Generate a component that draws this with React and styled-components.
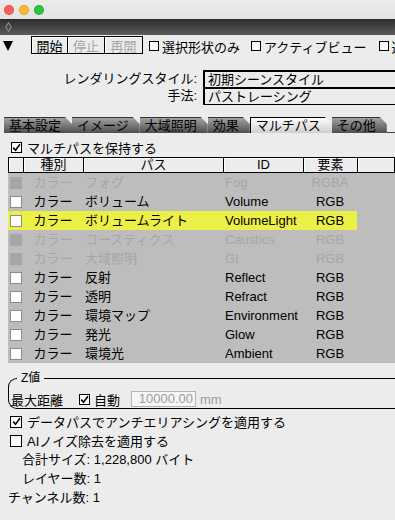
import React from 'react';
import styled, { createGlobalStyle, css } from 'styled-components';

const GlobalStyle = createGlobalStyle`
  html, body { margin: 0; padding: 0; overflow: hidden; }
  body {
    background: #ececec;
    font-family: "Liberation Sans", "Noto Sans CJK JP", sans-serif;
    font-size: 13px;
    color: #000;
  }
`;

// window chrome
const Win = styled.div`
  width: 395px;
  height: 520px;
  overflow: hidden;
  background: #ececec;
`;

const TitleBar = styled.div`
  height: 19px;
  display: flex;
  align-items: center;
  gap: 5px;
  padding-left: 4px;
  background: linear-gradient(#ececec, #e2e2e2);
`;

const Light = styled.span`
  width: 10px;
  height: 10px;
  border-radius: 50%;
  box-sizing: border-box;
  background: ${p => p.$c};
  border: 0.5px solid rgba(0, 0, 0, 0.15);
`;

const DarkBar = styled.div`
  height: 16px;
  display: flex;
  align-items: center;
  padding-left: 5px;
  background: linear-gradient(#2c2c2c, #5c5c5c);
`;

const Toolbar = styled.div`
  height: 22px;
  display: flex;
  align-items: center;
  padding-left: 3px;
  white-space: nowrap;
  overflow: hidden;

  & > * { flex: none; }
`;

const BtnGroup = styled.div`
  display: flex;
  margin-left: 19px;
  margin-top: -2px;
`;

const ToolBtn = styled.div`
  width: ${p => p.$w}px;
  height: 18px;
  box-sizing: border-box;
  border: 1px solid #000;
  margin-left: -1px;
  display: flex;
  align-items: center;
  justify-content: center;
  color: ${p => (p.$disabled ? '#a4a4a4' : '#000')};
  background: #ececec;
  box-shadow: inset 1px 1px #fff;
`;

const ToolCheck = styled.label`
  display: flex;
  align-items: center;
  gap: 3px;
  margin-left: ${p => p.$ml}px;
`;

const Box = styled.span`
  flex: none;
  width: ${p => p.$size}px;
  height: ${p => p.$size}px;
  box-sizing: border-box;
  background: #fff;
  border: 1px solid ${p => p.$border || '#000'};
  display: flex;
  align-items: center;
  justify-content: center;
  ${p => p.$off && css`
    background: #a6a6a6;
    border-color: #a6a6a6;
  `}
`;

// rendering style
const StyleGrid = styled.div`
  margin-top: 13px;
  display: grid;
  grid-template-columns: 197px 1fr;
  grid-auto-rows: 17px;
  column-gap: 6px;
`;

const StyleLabel = styled.div`
  text-align: right;
  white-space: nowrap;
  line-height: 18px;
`;

const StyleBox = styled.div`
  height: 18px;
  box-sizing: border-box;
  border: 1px solid #000;
  border-width: 2px 1px 1px 2px;
  margin-right: -20px;
  padding-left: 3px;
  line-height: 15px;
  white-space: nowrap;
`;

// tabs
const TabBar = styled.div`
  margin-top: 13px;
  display: flex;
  padding-left: 4px;
  height: 16px;
`;

const Tab = styled.div`
  height: 16px;
  line-height: 16px;
  padding: 0 11px 0 5px;
  white-space: nowrap;
  clip-path: polygon(0 0, calc(100% - 7px) 0, 100% 7px, 100% 100%, 0 100%);
  background: linear-gradient(#a2a2a2, #4e4e4e);
  border-top: 1px solid #333;
  box-sizing: border-box;
  ${p => p.$active && css`
    background: linear-gradient(#fdfdfd, #cfcfcf);
    border-top: 1px solid #000;
    border-left: 1px solid #000;
  `}
`;

const TabFill = styled.div`
  flex: 1;
  border-bottom: 1px solid #444;
`;

// multipass panel
const Panel = styled.div`
  padding-left: 8px;
`;

const CheckRow = styled.label`
  height: 19px;
  display: flex;
  align-items: center;
  gap: 5px;
  padding-left: ${p => p.$pl ?? 3}px;
  margin-top: ${p => p.$mt || 0}px;
  white-space: nowrap;
`;

const cols = '15px 60px 140px 80px 54px 1fr';

const Head = styled.div`
  display: grid;
  grid-template-columns: ${cols};
  height: 16px;
  box-sizing: border-box;
  border-top: 1px solid #000;
  border-bottom: 1px solid #000;
  border-left: 1px solid #000;
`;

const HeadCell = styled.div`
  border-right: 1px solid #000;
  text-align: center;
  line-height: 14px;
  box-shadow: inset 1px 1px #fff;
  white-space: nowrap;
`;

const Body = styled.div`
  background: #bdbdbd;
`;

const Row = styled.div`
  display: grid;
  grid-template-columns: ${cols};
  height: 19px;
  line-height: 19px;
  color: ${p => (p.$off ? '#a6a6a6' : '#000')};
  ${p => p.$sel && css`
    & > div:not(:last-child) { background: #ebf046; }
  `}
`;

const Cell = styled.div`
  display: flex;
  align-items: center;
  justify-content: ${p => p.$align || 'flex-start'};
  padding-left: ${p => p.$pl || 0}px;
  white-space: nowrap;
`;

// z group
const Group = styled.fieldset`
  margin: 8px -20px 0 8px;
  padding: 0 0 0 2px;
  border: 1px solid #000;
  border-right: none;
  border-radius: 9px 0 0 9px;
  min-width: 0;
`;

const Legend = styled.legend`
  font-size: 12px;
  line-height: 14px;
  padding: 0 4px;
  margin-left: 6px;
`;

const GroupRow = styled.div`
  margin-top: 5px;
  height: 18px;
  display: flex;
  align-items: center;
  white-space: nowrap;
`;

const AutoCheck = styled.label`
  display: flex;
  align-items: center;
  gap: 4px;
  margin-left: 16px;
`;

const NumField = styled.div`
  width: 65px;
  height: 16px;
  box-sizing: border-box;
  margin-left: 11px;
  border: 1px solid #b4b4b4;
  background: #f6f6f6;
  color: #9c9c9c;
  text-align: right;
  padding-right: 2px;
  line-height: 14px;
`;

const Unit = styled.span`
  color: #9c9c9c;
  margin-left: 4px;
`;

const Info = styled.div`
  height: 19px;
  line-height: 19px;
  padding-left: ${p => p.$pl || 0}px;
  white-space: nowrap;
`;

const Check = ({ checked }) => (
  <svg width="9" height="9" viewBox="0 0 9 9">
    {checked && <path d="M1.2 4.6 L3.5 7.2 L8 1.2" fill="none" stroke="#000" strokeWidth="1.6" />}
  </svg>
);

const passes = [
  { name: 'フォグ', id: 'Fog', el: 'RGBA', off: true },
  { name: 'ボリューム', id: 'Volume', el: 'RGB' },
  { name: 'ボリュームライト', id: 'VolumeLight', el: 'RGB', sel: true },
  { name: 'コースティクス', id: 'Caustics', el: 'RGB', off: true },
  { name: '大域照明', id: 'GI', el: 'RGB', off: true },
  { name: '反射', id: 'Reflect', el: 'RGB' },
  { name: '透明', id: 'Refract', el: 'RGB' },
  { name: '環境マップ', id: 'Environment', el: 'RGB' },
  { name: '発光', id: 'Glow', el: 'RGB' },
  { name: '環境光', id: 'Ambient', el: 'RGB' },
];

const tabs = ['基本設定', 'イメージ', '大域照明', '効果', 'マルチパス', 'その他'];

const App = () => {
  return (
    <Win>
      <GlobalStyle />
      <TitleBar>
        <Light $c="#fe5f57" />
        <Light $c="#febc2e" />
        <Light $c="#28c840" />
      </TitleBar>
      <DarkBar>
        <svg width="7" height="10" viewBox="0 0 7 10">
          <path d="M3.5 0.8 L6.2 5 L3.5 9.2 L0.8 5 Z" fill="none" stroke="#8a8a8a" strokeWidth="1.2" />
        </svg>
      </DarkBar>

      <Toolbar>
        <svg width="10" height="10" viewBox="0 0 10 10">
          <path d="M0 0 L10 0 L5 10 Z" fill="#000" />
        </svg>
        <BtnGroup>
          <ToolBtn $w={37}>開始</ToolBtn>
          <ToolBtn $w={38} $disabled>停止</ToolBtn>
          <ToolBtn $w={39} $disabled>再開</ToolBtn>
        </BtnGroup>
        <ToolCheck $ml={6}><Box $size={10} />選択形状のみ</ToolCheck>
        <ToolCheck $ml={11}><Box $size={10} />アクティブビュー</ToolCheck>
        <ToolCheck $ml={12}><Box $size={10} />選択</ToolCheck>
      </Toolbar>

      <StyleGrid>
        <StyleLabel>レンダリングスタイル:</StyleLabel>
        <StyleBox>初期シーンスタイル</StyleBox>
        <StyleLabel>手法:</StyleLabel>
        <StyleBox>パストレーシング</StyleBox>
      </StyleGrid>

      <TabBar>
        {tabs.map(t => (
          <Tab key={t} $active={t === 'マルチパス'}>{t}</Tab>
        ))}
        <TabFill />
      </TabBar>

      <Panel>
        <CheckRow $mt={5}>
          <Box $size={11}><Check checked /></Box>
          マルチパスを保持する
        </CheckRow>
        <Head>
          <HeadCell />
          <HeadCell>種別</HeadCell>
          <HeadCell>パス</HeadCell>
          <HeadCell>ID</HeadCell>
          <HeadCell>要素</HeadCell>
          <HeadCell />
        </Head>
        <Body>
          {passes.map(p => (
            <Row key={p.id} $off={p.off} $sel={p.sel}>
              <Cell $pl={2}><Box $size={12} $border="#8c8c8c" $off={p.off} /></Cell>
              <Cell $align="center">カラー</Cell>
              <Cell $pl={2}>{p.name}</Cell>
              <Cell $pl={2}>{p.id}</Cell>
              <Cell $align="center">{p.el}</Cell>
              <Cell />
            </Row>
          ))}
        </Body>
      </Panel>

      <Group>
        <Legend>Z値</Legend>
        <GroupRow>
          最大距離
          <AutoCheck><Box $size={11}><Check checked /></Box>自動</AutoCheck>
          <NumField>10000.00</NumField>
          <Unit>mm</Unit>
        </GroupRow>
      </Group>

      <Panel>
        <CheckRow $pl={2} $mt={3}>
          <Box $size={12}><Check checked /></Box>
          データパスでアンチエリアシングを適用する
        </CheckRow>
        <CheckRow $pl={2}>
          <Box $size={12} />
          AIノイズ除去を適用する
        </CheckRow>
        <Info $pl={14}>合計サイズ: 1,228,800 バイト</Info>
        <Info $pl={14}>レイヤー数: 1</Info>
        <Info>チャンネル数: 1</Info>
      </Panel>
    </Win>
  );
};

export default App;
